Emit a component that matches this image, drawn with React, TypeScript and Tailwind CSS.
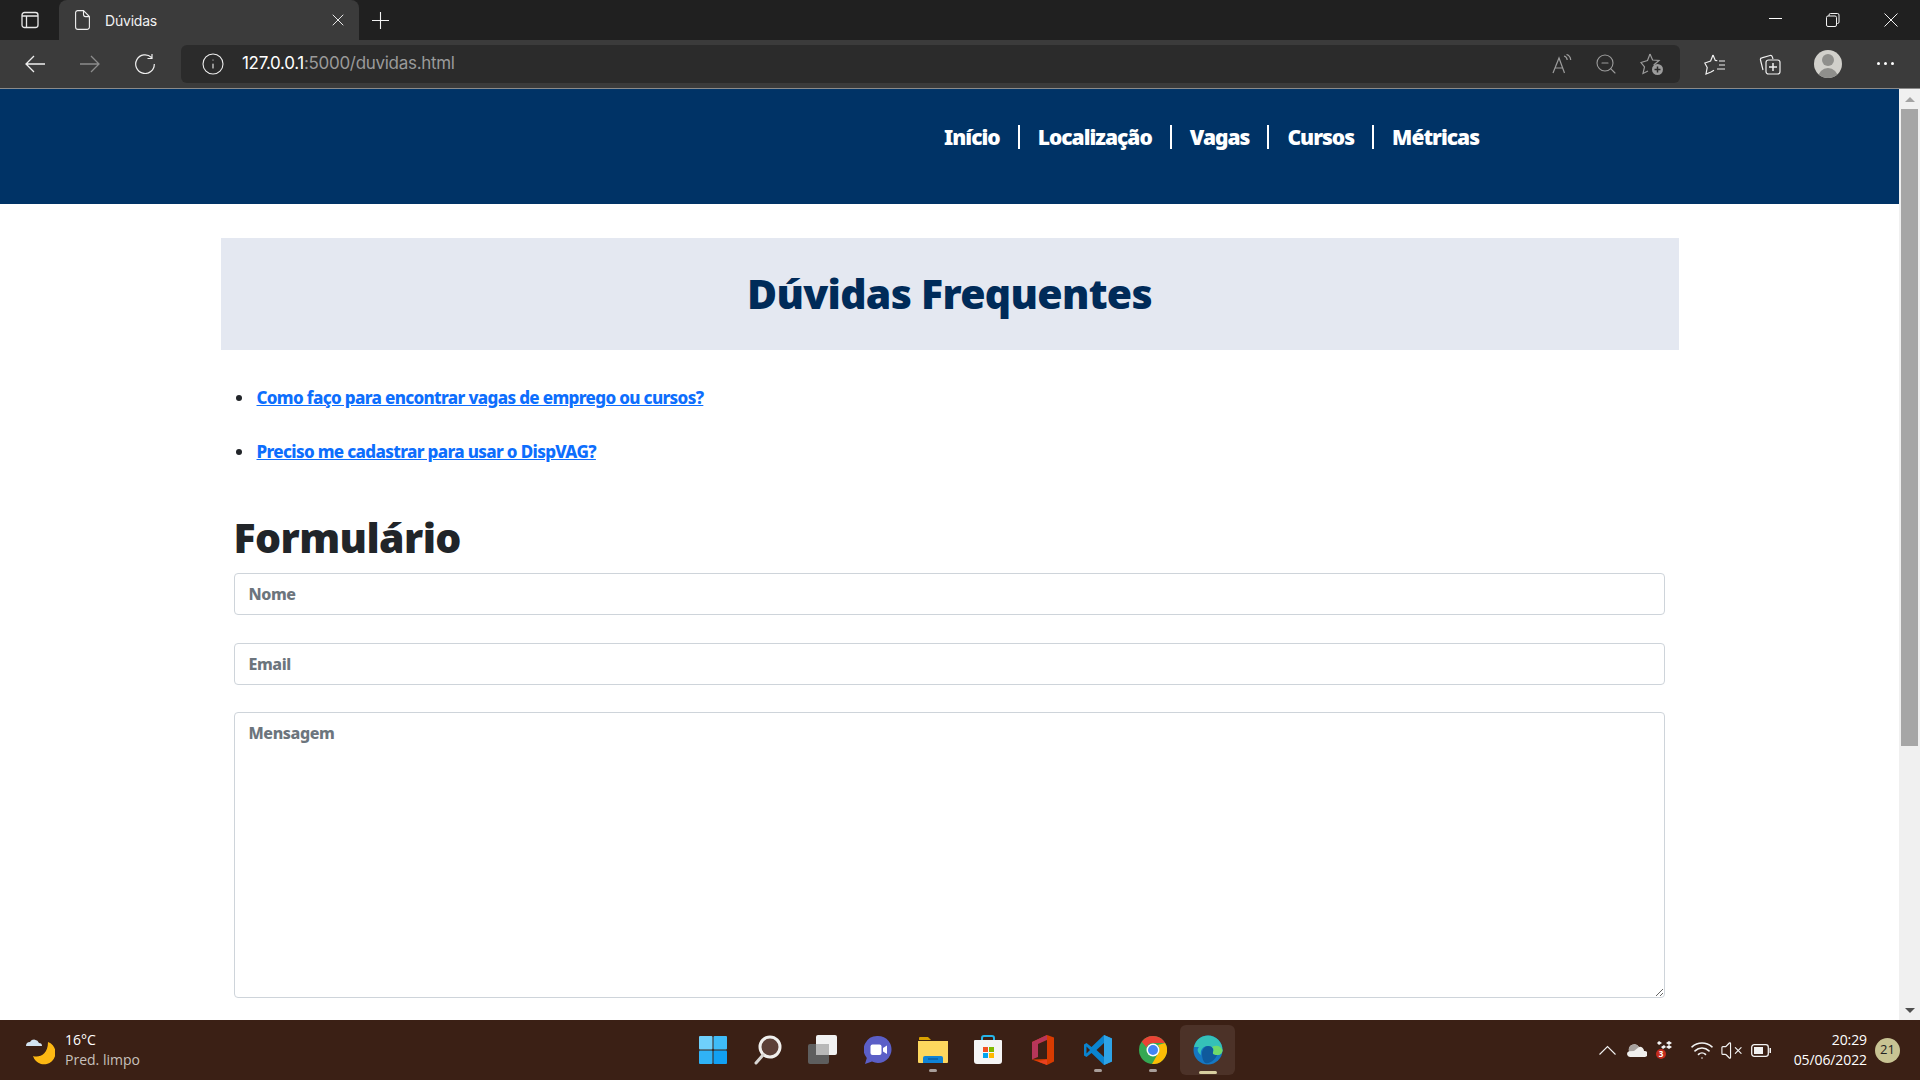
import { Info, VolumeX, Wifi, X, ZoomOut } from "lucide-react";

const BROWSER_FONT = "font-['Inter','Noto_Sans',sans-serif]";
const SYSTEM_FONT = "font-['Open_Sans','Noto_Sans',sans-serif]";

const NAV_LINKS = ["Início", "Localização", "Vagas", "Cursos", "Métricas"];

const TitleBar = () => (
  <div className="flex h-10 items-stretch bg-[#202020] text-white">
    <div className="flex w-[59px] items-center justify-center">
      <svg width="18" height="18" viewBox="0 0 18 18" fill="none" stroke="#e8e8e8" strokeWidth="1.3">
        <rect x="1" y="1.500" width="16" height="15" rx="2.500" />
        <path d="M1 5h16M5.500 5v11" />
      </svg>
    </div>
    <div className="flex w-[300px] items-center rounded-t-lg bg-[#3b3b3b] pl-[16px] pr-[11px]">
      <svg width="15" height="20" viewBox="0 0 15 20" fill="none" stroke="#f0f0f0" strokeWidth="1.100">
        <path d="M2.500.6h6L14.400 6.500V17a2.400 2.400 0 0 1-2.400 2.400H3A2.400 2.400 0 0 1 .6 17V2.500A2 2 0 0 1 2.500.6zM8.500.6v4a2 2 0 0 0 2 2h3.900" />
      </svg>
      <span className={`ml-[15px] text-[14px] tracking-[-0.2px] text-[#f2f2f2] ${BROWSER_FONT}`}>Dúvidas</span>
      <X size={20} strokeWidth={1.2} className="ml-auto" color="#e8e8e8" />
    </div>
    <div className="ml-[13px] flex items-center">
      <svg width="17" height="17" viewBox="0 0 17 17" stroke="#f2f2f2" strokeWidth="1.100">
        <path d="M8.500 0v17M0 8.500h17" />
      </svg>
    </div>
    <div className="ml-auto flex items-center">
      <div className="flex w-[58px] justify-center">
        <div className="mt-[-2px] h-px w-[13px] bg-white" />
      </div>
      <div className="flex w-[58px] justify-center">
        <svg width="14" height="14" viewBox="0 0 14 14" fill="none" stroke="#f2f2f2" strokeWidth="1">
          <rect x="0.500" y="3" width="10" height="10.500" rx="1.500" />
          <path d="M3 3V2a1.500 1.500 0 0 1 1.500-1.500h7A1.500 1.500 0 0 1 13 2v7a1.500 1.500 0 0 1-1.500 1.500h-1" />
        </svg>
      </div>
      <div className="flex w-[58px] justify-center">
        <svg width="14" height="14" viewBox="0 0 14 14" stroke="#f2f2f2" strokeWidth="1">
          <path d="M0.500 0.500l13 13M13.500 0.500l-13 13" />
        </svg>
      </div>
    </div>
  </div>
);

const ToolBar = () => (
  <div className="flex h-[49px] items-center border-b border-[#8a8a8a] bg-[#3b3b3b] pb-px">
    <div className="flex w-[181px] items-center gap-[35px] pl-[25px]">
      <svg width="20" height="20" viewBox="0 0 20 20" fill="none" stroke="#efefef" strokeWidth="1.300">
        <path d="M1 10h19M9 2l-8 8 8 8" />
      </svg>
      <svg width="20" height="20" viewBox="0 0 20 20" fill="none" stroke="#8c8c8c" strokeWidth="1.300">
        <path d="M0 10h19M11 2l8 8-8 8" />
      </svg>
      <svg width="20" height="20" viewBox="0 0 20 20" fill="none" stroke="#efefef" strokeWidth="1.200">
        <path d="M16.500 3.500A9.300 9.300 0 1 0 19.300 10M17 0v4.500h-4.500" />
      </svg>
    </div>
    <div className="flex h-[38px] w-[1499px] items-center rounded-md bg-[#2b2b2b] pl-[20px] pr-[16px]">
      <Info size={24} strokeWidth={1.1} color="#eeeeee" />
      <span className={`ml-[17px] text-[17px] tracking-[-0.3px] text-[#9a9a9a] ${BROWSER_FONT}`}>
        <span className="text-white">127.0.0.1</span>:5000/duvidas.html
      </span>
      <div className="ml-auto flex items-center gap-[22px]">
        <svg width="20" height="20" viewBox="0 0 20 20" fill="none" stroke="#9c9c9c" strokeWidth="1.200">
          <path d="M1 19L7 4l5.500 15M3.200 14h7.500M12 2c2 .5 3 2 3.200 4M14.500 .5c2.500.7 4 2.600 4.200 5.500" />
        </svg>
        <ZoomOut size={24} strokeWidth={1.1} color="#9c9c9c" />
        <svg width="24" height="24" viewBox="0 0 24 24" fill="none" stroke="#9c9c9c" strokeWidth="1.200">
          <path d="M10 2l2.600 6 6.400.5-4.900 4.200 .6 1M8 19l-5 2.500 1.500-6.500L1 10.500l6.500-2L10 2" />
          <circle cx="17.500" cy="17.500" r="5.500" fill="#9c9c9c" stroke="none" />
          <path d="M17.500 14.500v6M14.500 17.500h6" stroke="#2b2b2b" strokeWidth="1.500" />
        </svg>
      </div>
    </div>
    <div className="flex flex-1 items-center pl-[24px]">
      <svg width="22" height="22" viewBox="0 0 22 22" fill="none" stroke="#efefef" strokeWidth="1.200">
        <path d="M9 2l2.300 5.500 2 .1M7 19l-5 2 1.200-6.500L.8 10l5.800-2L9 2M7 19l3-1.800M15 8h6M15 12h6M13 16h8" />
      </svg>
      <svg width="22" height="22" viewBox="0 0 22 22" fill="none" stroke="#efefef" strokeWidth="1.200" className="ml-[33px]">
        <path d="M4 17L1.500 7c-.3-1 .2-2 1.300-2.200L11 2.500c1-.2 2 .3 2.300 1.300L14 6" />
        <rect x="7" y="7" width="14" height="14" rx="2.500" />
        <path d="M14 10v8M10 14h8" strokeWidth="1.500" />
      </svg>
      <div className="relative ml-[33px] h-7 w-7 overflow-hidden rounded-full bg-[#d1d0cb]">
        <div className="absolute left-[8px] top-[4px] h-3 w-3 rounded-full bg-[#8f8f8c]" />
        <div className="absolute left-[4px] top-[18px] h-5 w-5 rounded-full bg-[#8f8f8c]" />
      </div>
      <div className="ml-[35px] flex gap-[4px]">
        <span className="h-[3px] w-[3px] rounded-full bg-white" />
        <span className="h-[3px] w-[3px] rounded-full bg-white" />
        <span className="h-[3px] w-[3px] rounded-full bg-white" />
      </div>
    </div>
  </div>
);

const PageContent = () => (
  <div className="min-w-0 flex-1 overflow-hidden font-['Noto_Sans',sans-serif] font-black">
    <nav className="flex h-[115px] items-start bg-[#003366] pl-[944px] pt-[31px] text-[21px] leading-[34px] tracking-[-1px] text-white">
      {NAV_LINKS.map((link, i) => (
        <span key={link} className="flex items-center">
          {i > 0 && <span className="mx-[18px] h-[24px] w-[2px] bg-white" />}
          <span>{link}</span>
        </span>
      ))}
    </nav>
    <main className="mx-auto w-[1458px]">
      <div className="mt-[34px] flex h-[112px] items-center justify-center bg-[#e4e8f1]">
        <h1 className="text-[41px] tracking-[-0.7px] text-[#002b59]">Dúvidas Frequentes</h1>
      </div>
      <ul className="mt-[34px] pl-[15px] text-[17px] font-extrabold leading-[28px] tracking-[-0.65px] text-[#0d6efd]">
        <li className="flex h-[28px] items-center">
          <span className="mr-[15px] h-[6px] w-[6px] rounded-full bg-[#212529]" />
          <a href="#" className="underline">Como faço para encontrar vagas de emprego ou cursos?</a>
        </li>
        <li className="mt-[26px] flex h-[28px] items-center">
          <span className="mr-[15px] h-[6px] w-[6px] rounded-full bg-[#212529]" />
          <a href="#" className="underline">Preciso me cadastrar para usar o DispVAG?</a>
        </li>
      </ul>
      <form className="mt-[43px] pl-[13px] pr-[14px]">
        <h2 className="text-[41px] leading-[56px] tracking-[-0.6px] text-[#212529]">Formulário</h2>
        <input
          placeholder="Nome"
          className="mt-[8px] block h-[42px] w-full rounded-[4px] border border-[#ced4da] px-[14px] text-[16px] font-extrabold tracking-[-0.4px] placeholder:text-[#6c757d]"
        />
        <input
          placeholder="Email"
          className="mt-[28px] block h-[42px] w-full rounded-[4px] border border-[#ced4da] px-[14px] text-[16px] font-extrabold tracking-[-0.4px] placeholder:text-[#6c757d]"
        />
        <textarea
          placeholder="Mensagem"
          className="mt-[27px] block h-[286px] w-full rounded-[4px] border border-[#ced4da] px-[14px] py-[8px] text-[16px] font-extrabold tracking-[-0.4px] placeholder:text-[#6c757d]"
        />
      </form>
    </main>
  </div>
);

const ScrollBar = () => (
  <div className="flex w-[21px] flex-col items-center bg-[#f0f0f0]">
    <div className="flex h-[20px] items-center justify-center">
      <div className="h-0 w-0 border-x-[5px] border-b-[5px] border-x-transparent border-b-[#a3a3a3]" />
    </div>
    <div className="h-[637px] w-[17px] bg-[#a6a6a6]" />
    <div className="mt-auto flex h-[20px] items-center justify-center">
      <div className="h-0 w-0 border-x-[5px] border-t-[5px] border-x-transparent border-t-[#505050]" />
    </div>
  </div>
);

const WeatherIcon = () => (
  <svg width="30" height="30" viewBox="0 0 30 30">
    <path d="M19 6a11.500 11.500 0 1 1-15 14c6 2 15-1 15-14z" fill="#fdb813" transform="translate(4 1)" />
    <path d="M1 11a4 4 0 0 1 4-4 5 5 0 0 1 9 1 3 3 0 0 1 3 3z" fill="#d4e4f2" />
  </svg>
);

const TaskIcon = ({ children, dot, active }: { children: React.ReactNode; dot?: boolean; active?: boolean }) => (
  <div className={`relative flex h-[50px] w-[55px] items-center justify-center rounded-md ${active ? "bg-[#4c3228]" : ""}`}>
    {children}
    {dot && <span className="absolute bottom-[3px] h-[3px] w-[8px] rounded-full bg-[#a89e9a]" />}
    {active && <span className="absolute bottom-[1px] h-[3px] w-[18px] rounded-full bg-[#d8cfa0]" />}
  </div>
);

const TaskBar = () => (
  <div className={`relative flex h-[60px] items-center bg-[#3b2015] text-white ${SYSTEM_FONT}`}>
    <div className="flex w-[685px] items-center pl-[25px]">
      <WeatherIcon />
      <div className="ml-[10px] text-[14px] leading-[20px]">
        <div>16°C</div>
        <div className="text-[#c8c0bc]">Pred. limpo</div>
      </div>
    </div>
    <div className="flex items-center">
      <TaskIcon>
        <svg width="28" height="28" viewBox="0 0 28 28">
          <rect x="0" y="0" width="13.500" height="13.500" rx="1" fill="#6fd0fb" />
          <rect x="14.500" y="0" width="13.500" height="13.500" rx="1" fill="#3fbcf8" />
          <rect x="0" y="14.500" width="13.500" height="13.500" rx="1" fill="#30b2f6" />
          <rect x="14.500" y="14.500" width="13.500" height="13.500" rx="1" fill="#12a0f3" />
        </svg>
      </TaskIcon>
      <TaskIcon>
        <svg width="28" height="30" viewBox="0 0 28 30" fill="none">
          <circle cx="16" cy="12" r="10" fill="#5c4038" stroke="#f0efed" strokeWidth="3" />
          <path d="M9 20l-7 8" stroke="#d8d6d3" strokeWidth="3" strokeLinecap="round" />
        </svg>
      </TaskIcon>
      <TaskIcon>
        <svg width="30" height="30" viewBox="0 0 30 30">
          <rect x="0" y="9" width="21" height="20" rx="2" fill="#5e5e5e" />
          <rect x="8" y="0" width="21" height="20" rx="2" fill="#f2f2f2" />
          <rect x="8" y="9" width="13" height="11" fill="#b8b8b8" />
        </svg>
      </TaskIcon>
      <TaskIcon>
        <svg width="28" height="30" viewBox="0 0 28 30">
          <path d="M14 1a13.500 13.500 0 1 1-6 25.600L1 29l1.800-6A13.500 13.500 0 0 1 14 1z" fill="#5b5fc7" />
          <rect x="6.500" y="9.500" width="11" height="10.500" rx="2" fill="#fff" />
          <path d="M19 13l4-2.500v8.500l-4-2.500z" fill="#fff" />
        </svg>
      </TaskIcon>
      <TaskIcon dot>
        <svg width="30" height="28" viewBox="0 0 30 28">
          <path d="M1 2a1 1 0 0 1 1-1h8l3 3h-12z" fill="#d9a100" />
          <path d="M0 5h30v21a1 1 0 0 1-1 1H1a1 1 0 0 1-1-1z" fill="#fdd75e" />
          <path d="M5 22a2 2 0 0 1 2-2h16a2 2 0 0 1 2 2v5H5z" fill="#0f83d6" />
          <rect x="10" y="22.500" width="10" height="1" fill="#074d8c" />
        </svg>
      </TaskIcon>
      <TaskIcon>
        <svg width="28" height="30" viewBox="0 0 28 30">
          <path d="M8 5V3a2 2 0 0 1 2-2h8a2 2 0 0 1 2 2v2" fill="none" stroke="#26b5e8" strokeWidth="2" />
          <path d="M0 6a1 1 0 0 1 1-1h26a1 1 0 0 1 1 1v20a3 3 0 0 1-3 3H3a3 3 0 0 1-3-3z" fill="#f5f5f5" />
          <rect x="9" y="12" width="5" height="5" fill="#f25022" />
          <rect x="15" y="12" width="5" height="5" fill="#7fba00" />
          <rect x="9" y="18" width="5" height="5" fill="#00a4ef" />
          <rect x="15" y="18" width="5" height="5" fill="#ffb900" />
        </svg>
      </TaskIcon>
      <TaskIcon>
        <svg width="24" height="30" viewBox="0 0 24 30">
          <path d="M16 0l7 2.500v24L16 30 1 24.500V7z" fill="#d83b01" />
          <path d="M1 7l15-7v5L7 9v13l-6 2.500z" fill="#b7365a" />
          <path d="M7 9l9-4v19L1 24.500 7 22z" fill="#3b2015" />
          <path d="M16 0v30l-9-3.500 9-2V5z" fill="#e8411f" />
        </svg>
      </TaskIcon>
      <TaskIcon dot>
        <svg width="28" height="30" viewBox="0 0 28 30">
          <path d="M20 0l8 3.500v23L20 30 7.500 18 2.500 22 0 20.500V9.500L2.500 8l5 4z" fill="#0a84d0" />
          <path d="M20 8l-7.500 7 7.500 7z" fill="#3b2015" />
          <path d="M20 0l8 3.500v23L20 30z" fill="#2ea3e6" />
          <path d="M2.500 11.500L6 15l-3.500 3.500z" fill="#3b2015" />
        </svg>
      </TaskIcon>
      <TaskIcon dot>
        <svg width="28" height="28" viewBox="0 0 28 28">
          <circle cx="14" cy="14" r="14" fill="#34a853" />
          <path d="M14 0a14 14 0 0 1 12.100 7H14a7 7 0 0 0-6.500 4.300L2.700 5.800A14 14 0 0 1 14 0z" fill="#ea4335" />
          <path d="M26.100 7A14 14 0 0 1 13 28l6-10.500A7 7 0 0 0 19 9z" fill="#fbbc05" />
          <circle cx="14" cy="14" r="6.500" fill="#fff" />
          <circle cx="14" cy="14" r="5" fill="#4285f4" />
        </svg>
      </TaskIcon>
      <TaskIcon active>
        <svg width="30" height="30" viewBox="0 0 30 30">
          <circle cx="15" cy="15" r="14.500" fill="#1577c2" />
          <path d="M1 12C3 4 9 .5 15 .5 23 .5 29.500 7 29.500 15c0 3-2 5-5.500 5-3 0-5-1-4-3 1-3-1-6-5-6-5 0-8 4-7 9-4-3-4-6-2-8z" fill="#35c1b8" />
          <path d="M29.500 15c0 3-2 5-5.500 5-3 0-5-1-4-3 1-2 1-4-1-5 4-2 8-2 10.500 3z" fill="#6fd96a" />
          <path d="M9 19c0-5 3-8 6-8 4 0 6 3 5 6-1 3 2 3 4 3-2 5-7 9-12 8-2-2-3-5-3-9z" fill="#0f5a9c" />
        </svg>
      </TaskIcon>
    </div>
    <div className="ml-auto flex items-center pr-[20px]">
      <svg width="17" height="10" viewBox="0 0 17 10" fill="none" stroke="#f2f2f2" strokeWidth="1.100">
        <path d="M.5 9.500l8-8 8 8" />
      </svg>
      <svg width="20" height="14" viewBox="0 0 20 14" className="ml-[11px]">
        <path d="M3 14a3 3 0 0 1-1-5.800A5.500 5.500 0 0 1 12 4a4 4 0 0 1 5 4 3 3 0 0 1 1 6z" fill="#f0efed" />
        <path d="M2 8.200A5.500 5.500 0 0 1 12 4L7 8z" fill="#a8a29f" />
      </svg>
      <div className="relative ml-[10px] h-[20px] w-[18px]">
        <svg width="18" height="18" viewBox="0 0 18 18" fill="#f2f2f2">
          <path d="M2 1l3 2-3 2-2-2zM9 3l3-2 3 2-3 2zM9 7l3-2 3 2-3 2zM4 7l3-2 2 2-3 2z" />
        </svg>
        <span className="absolute left-[-1px] top-[9px] flex h-[10px] w-[10px] items-center justify-center rounded-full bg-[#c42b1c] text-[8px] font-bold leading-none">3</span>
      </div>
      <Wifi size={24} strokeWidth={1.6} color="#f2f2f2" className="ml-[15px]" />
      <VolumeX size={23} strokeWidth={1.2} color="#f2f2f2" className="ml-[6px]" />
      <svg width="20" height="13" viewBox="0 0 20 13" className="ml-[8px]">
        <rect x="0.700" y="0.700" width="16.600" height="11.600" rx="2.500" fill="none" stroke="#f2f2f2" strokeWidth="1.300" />
        <rect x="3" y="3" width="9" height="7" fill="#f2f2f2" />
        <rect x="18.500" y="4" width="1.500" height="5" fill="#f2f2f2" />
      </svg>
      <div className="ml-[19px] w-[77px] text-right text-[14px] leading-[20px] tracking-[-0.1px]">
        <div>20:29</div>
        <div>05/06/2022</div>
      </div>
      <div className="ml-[8px] flex h-[25px] w-[25px] items-center justify-center rounded-full bg-[#c8c393] text-[13px] text-[#222222]">
        21
      </div>
    </div>
  </div>
);

export default function App() {
  return (
    <div className="flex h-screen w-full flex-col overflow-hidden bg-white">
      <TitleBar />
      <ToolBar />
      <div className="flex min-h-0 flex-1">
        <PageContent />
        <ScrollBar />
      </div>
      <TaskBar />
    </div>
  );
}
